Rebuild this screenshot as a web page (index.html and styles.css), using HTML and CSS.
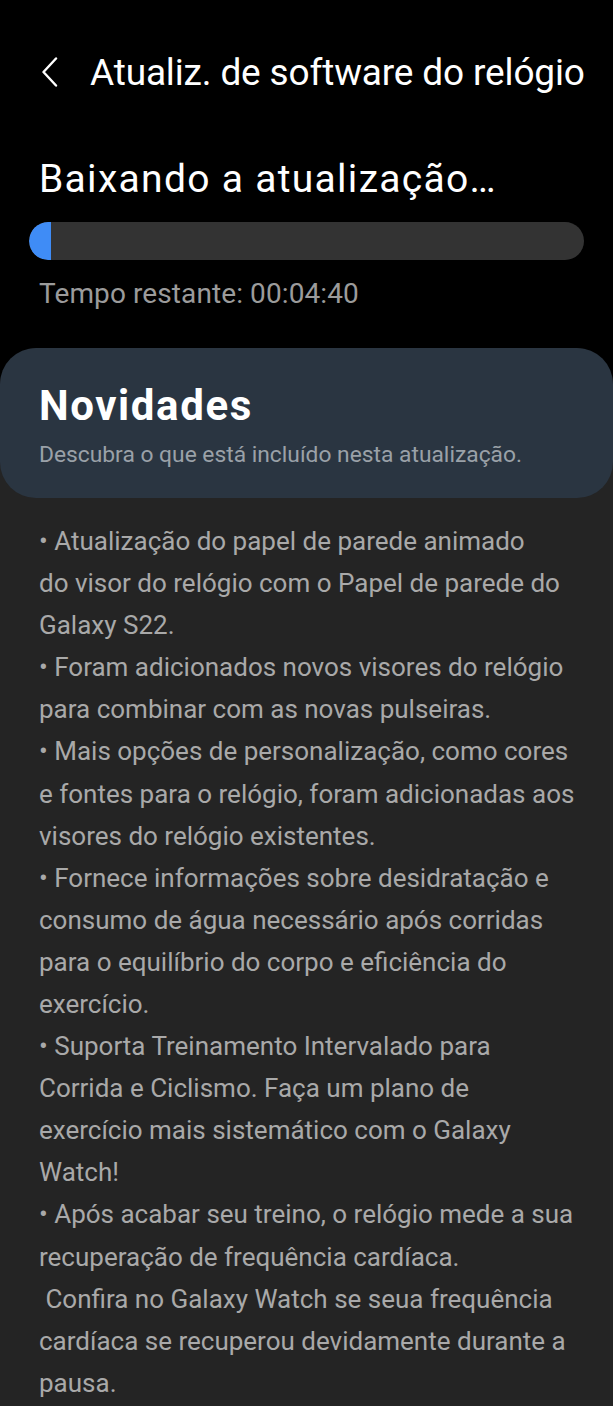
FILE: index.html
```html
<!DOCTYPE html>
<html lang="pt">
<head>
<meta charset="utf-8">
<link rel="stylesheet" href="styles.css">
</head>
<body>
<div class="screen">
  <header class="appbar">
    <svg class="back" width="18" height="30" viewBox="0 0 18 30"><polyline points="15,1.5 2.5,15 15,28.5" fill="none" stroke="#fff" stroke-width="2.4" stroke-linecap="round" stroke-linejoin="round"/></svg>
    <h1 class="title">Atualiz. de software do relógio</h1>
  </header>
  <section class="status">
    <h2 class="status-title">Baixando a atualização…</h2>
    <div class="bar"><div class="fill" style="width:22px"></div></div>
    <p class="remaining">Tempo restante: 00:04:40</p>
  </section>
  <section class="card">
    <div class="card-head">
      <h3 class="card-title">Novidades</h3>
      <p class="card-sub">Descubra o que está incluído nesta atualização.</p>
    </div>
    <div class="card-body">
      <p class="notes">• Atualização do papel de parede animado<br>do visor do relógio com o Papel de parede do<br>Galaxy S22.<br>• Foram adicionados novos visores do relógio<br>para combinar com as novas pulseiras.<br>• Mais opções de personalização, como cores<br>e fontes para o relógio, foram adicionadas aos<br>visores do relógio existentes.<br>• Fornece informações sobre desidratação e<br>consumo de água necessário após corridas<br>para o equilíbrio do corpo e eficiência do<br>exercício.<br>• Suporta Treinamento Intervalado para<br>Corrida e Ciclismo. Faça um plano de<br>exercício mais sistemático com o Galaxy<br>Watch!<br>• Após acabar seu treino, o relógio mede a sua<br>recuperação de frequência cardíaca.<br>&nbsp;Confira no Galaxy Watch se seua frequência<br>cardíaca se recuperou devidamente durante a<br>pausa.</p>
    </div>
  </section>
</div>
</body>
</html>
```
FILE: styles.css
```css
* { box-sizing: border-box; margin: 0; padding: 0; }
html, body { background: #000; }
body { font-family: Roboto, "Noto Sans", sans-serif; color: #fff; }
.screen { width: 613px; min-height: 1406px; overflow: hidden; }
.appbar { display: flex; align-items: center; padding-top: 51px; padding-left: 41px; }
.back { flex: none; margin-right: 31px; margin-top: -3px; }
.title { font-size: 37px; line-height: 44px; font-weight: 400; letter-spacing: -0.15px; white-space: nowrap; }
.status { padding: 59.7px 29px 0 29px; }
.status-title { font-size: 39px; line-height: 48px; font-weight: 400; padding-left: 10px; letter-spacing: 1.3px; white-space: nowrap; }
.bar { margin-top: 19.3px; height: 38px; border-radius: 19px; background: #333333; overflow: hidden; }
.fill { height: 100%; background: #3f8cf6; border-radius: 19px 0 0 19px; }
.remaining { margin-top: 17.4px; padding-left: 10px; font-size: 28px; line-height: 34px; color: #9b9b9b; letter-spacing: 0.1px; }
.card { margin-top: 36.6px; background: #242424; border-radius: 38px 38px 0 0; }
.card-head { background: #2a3541; border-radius: 36px; padding: 34px 39px 0 39px; height: 150px; }
.card-title { font-size: 42px; line-height: 48px; font-weight: 700; letter-spacing: 1.6px; }
.card-sub { margin-top: 11.3px; font-size: 22.8px; line-height: 28px; color: #9aa1a8; white-space: nowrap; }
.card-body { padding: 22px 39px 10px 39px; }
.notes { font-size: 26px; line-height: 42.1px; color: #a9a9a9; white-space: nowrap; }
```
